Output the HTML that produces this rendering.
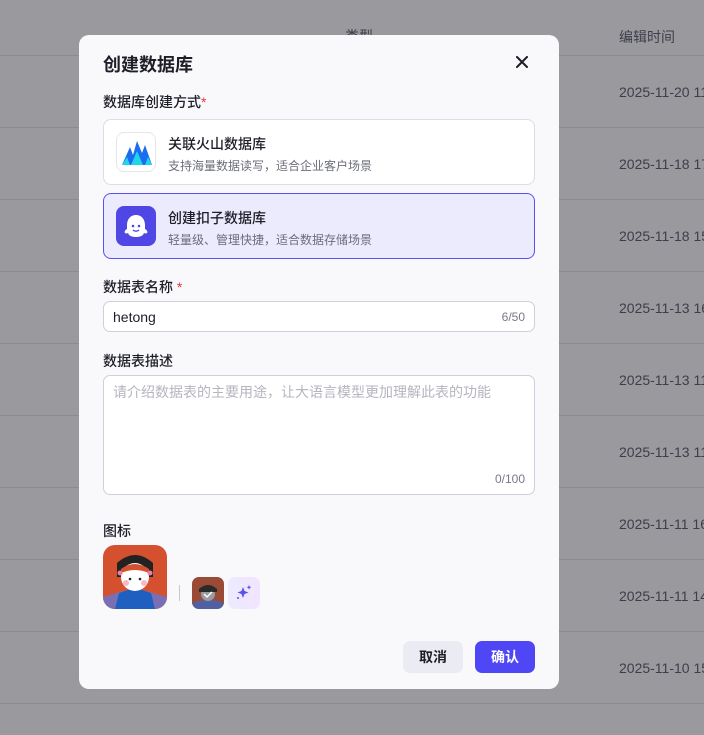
<!DOCTYPE html>
<html><head><meta charset="utf-8"><style>
*{box-sizing:border-box;margin:0;padding:0}
body{width:704px;height:735px;overflow:hidden;background:#9a9a9e;font-family:"Liberation Sans","Noto Sans CJK SC",sans-serif;position:relative}
.bg{position:absolute;left:0;width:704px;border-top:1px solid #8c8c90}
.dt{position:absolute;left:619px;font-size:14px;color:#3c3e4a;white-space:nowrap}
.modal{position:absolute;left:79px;top:35px;width:480px;height:654px;background:#f9f9fc;border-radius:10px}
.t{position:absolute;color:#1d1e27}
.card{position:absolute;left:24px;width:432px;height:66px;border:1px solid #dcdce3;border-radius:8px;background:#fff}
.card .ic{position:absolute;left:12px;top:12px;width:40px;height:40px;border-radius:8px}
.card .a{position:absolute;left:64px;top:14px;font-size:14px;color:#1d1e27;font-weight:500}
.card .b{position:absolute;left:64px;top:37px;font-size:12px;color:#6b6d7a}
.inp{position:absolute;left:24px;width:432px;border:1px solid #cfcfdc;border-radius:7px;background:#fff}
</style></head><body>
<div class="bg" style="top:55px"></div><div class="bg" style="top:127px"></div><div class="bg" style="top:199px"></div><div class="bg" style="top:271px"></div><div class="bg" style="top:343px"></div><div class="bg" style="top:415px"></div><div class="bg" style="top:487px"></div><div class="bg" style="top:559px"></div><div class="bg" style="top:631px"></div><div class="bg" style="top:703px"></div>
<div class="dt" style="top:27px">编辑时间</div>
<div class="dt" style="top:84px">2025-11-20 11</div>
<div class="dt" style="top:156px">2025-11-18 17</div>
<div class="dt" style="top:228px">2025-11-18 15</div>
<div class="dt" style="top:300px">2025-11-13 16</div>
<div class="dt" style="top:372px">2025-11-13 11</div>
<div class="dt" style="top:444px">2025-11-13 11</div>
<div class="dt" style="top:516px">2025-11-11 16</div>
<div class="dt" style="top:588px">2025-11-11 14</div>
<div class="dt" style="top:660px">2025-11-10 15</div>
<div class="dt" style="top:26px;left:345px">类型</div>
<div class="modal">
<div class="t" style="left:24px;top:16px;font-size:18px;font-weight:bold">创建数据库</div>
<svg style="position:absolute;left:437px;top:21px" width="12" height="12"><path d="M1 1L11 11M11 1L1 11" stroke="#1d1e27" stroke-width="2" stroke-linecap="round"/></svg>
<div class="t" style="left:24px;top:57px;font-size:14px;font-weight:500">数据库创建方式<span style="color:#e53935">*</span></div>
<div class="card" style="top:84px"><div class="ic" style="border:1px solid #e6e6ea;background:#fff"><svg width="40" height="40" viewBox="0 0 40 40"><path d="M5 32L13 14L16 22L20 8L25 20L28 12L35 32Z" fill="#1a6cf0"/><path d="M5 32L10 24L13 32Z M14 32L20 18L26 32Z M28 32L31 24L35 32Z" fill="#22d4e8"/></svg></div><div class="a">关联火山数据库</div><div class="b">支持海量数据读写，适合企业客户场景</div></div>
<div class="card" style="top:158px;background:#ebebfd;border-color:#5a4ff0"><div class="ic" style="background:#4f46e5"><svg width="40" height="40" viewBox="0 0 40 40"><path d="M20 9c-6 0-9 5-9 10v4c-2 1-3 3-2 4 1 1 3 0 3 0 1 3 4 4 8 4s7-1 8-4c0 0 2 1 3 0 1-1 0-3-2-4v-4c0-5-3-10-9-10z" fill="#fff"/><circle cx="17" cy="20" r="1.3" fill="#4f46e5"/><circle cx="23" cy="20" r="1.3" fill="#4f46e5"/><path d="M17 24q3 2.5 6 0" stroke="#4f46e5" stroke-width="1.3" fill="none"/></svg></div><div class="a">创建扣子数据库</div><div class="b">轻量级、管理快捷，适合数据存储场景</div></div>
<div class="t" style="left:24px;top:242px;font-size:14px;font-weight:500">数据表名称 <span style="color:#e53935">*</span></div>
<div class="inp" style="top:266px;height:31px"><span style="position:absolute;left:9px;top:7px;font-size:14px;color:#1d1e27">hetong</span><span style="position:absolute;right:9px;top:8px;font-size:12px;color:#777a88">6/50</span></div>
<div class="t" style="left:24px;top:316px;font-size:14px;font-weight:500">数据表描述</div>
<div class="inp" style="top:340px;height:120px"><span style="position:absolute;left:9px;top:6px;font-size:14px;color:#b4b5c0">请介绍数据表的主要用途，让大语言模型更加理解此表的功能</span><span style="position:absolute;right:9px;bottom:8px;font-size:12px;color:#777a88">0/100</span></div>
<div class="t" style="left:24px;top:486px;font-size:14px;font-weight:500">图标</div>
<div style="position:absolute;left:24px;top:510px;width:64px;height:64px;border-radius:12px;background:#d4502e;overflow:hidden"><svg width="64" height="64"><path d="M0 52L20 46L44 46L64 52V64H0Z" fill="#7b6fb3"/><path d="M16 48L28 44L36 44L48 48L52 64H12Z" fill="#1f5fbf"/><path d="M14 18q18-16 36 0v14H14Z" fill="#222"/><ellipse cx="32" cy="32" rx="14" ry="14" fill="#fff"/><path d="M18 24q14-10 28 0v4q-14-6-28 0Z" fill="#d4502e"/><circle cx="27" cy="34" r="1.3" fill="#222"/><circle cx="37" cy="34" r="1.3" fill="#222"/><circle cx="23" cy="38" r="3" fill="#f7b9c4"/><circle cx="41" cy="38" r="3" fill="#f7b9c4"/><circle cx="17" cy="28" r="2.5" fill="#e87fa0"/><circle cx="47" cy="28" r="2.5" fill="#e87fa0"/></svg></div>
<div style="position:absolute;left:100px;top:550px;width:1px;height:16px;background:#c8c8d2"></div>
<div style="position:absolute;left:113px;top:542px;width:32px;height:32px;border-radius:7px;background:#9a4b35;overflow:hidden"><svg width="32" height="32"><path d="M0 26L10 23H22L32 26V32H0Z" fill="#5060a0"/><ellipse cx="16" cy="17" rx="7" ry="7" fill="#9a9aa0"/><path d="M7 12q9-8 18 0v3H7Z" fill="#2a2a2a"/><path d="M12 17l3 3 5-5" stroke="#fff" stroke-width="1.5" fill="none"/></svg></div>
<div style="position:absolute;left:149px;top:542px;width:32px;height:32px;border-radius:7px;background:linear-gradient(90deg,#ecebff,#f1e4ff)"><svg width="32" height="32"><path d="M15 10l1.5 4 4 1.5-4 1.5-1.5 4-1.5-4-4-1.5 4-1.5z" fill="#5a4ff0"/><path d="M21 8l.7 1.6 1.6.7-1.6.7-.7 1.6-.7-1.6-1.6-.7 1.6-.7z" fill="#5a4ff0"/><circle cx="10" cy="21" r="1" fill="#5a4ff0"/></svg></div>
<div style="position:absolute;left:324px;top:606px;width:60px;height:32px;border-radius:7px;background:#ebecf3;font-size:14px;font-weight:bold;color:#1d1e27;text-align:center;line-height:32px">取消</div>
<div style="position:absolute;left:396px;top:606px;width:60px;height:32px;border-radius:7px;background:#4f46f5;font-size:14px;font-weight:bold;color:#fff;text-align:center;line-height:32px">确认</div>
</div>
</body></html>
